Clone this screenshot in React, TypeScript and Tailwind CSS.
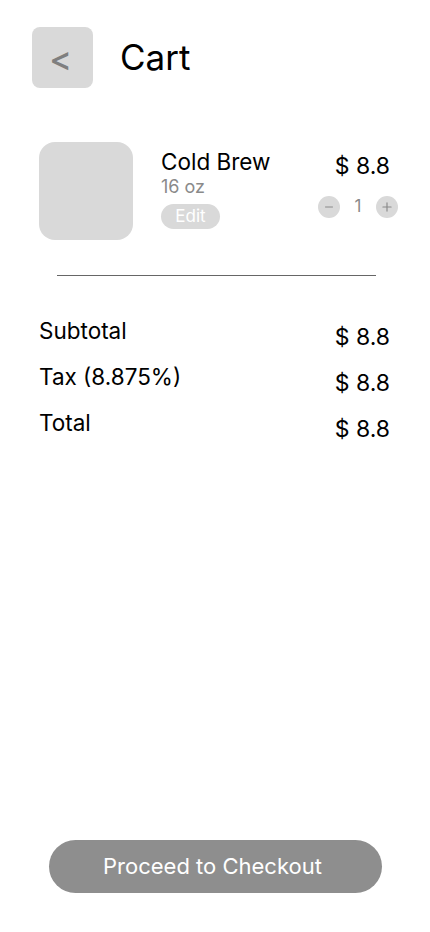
import { Minus, Plus } from "lucide-react";

const rows = [
  { label: "Subtotal", value: "$ 8.8" },
  { label: "Tax (8.875%)", value: "$ 8.8" },
  { label: "Total", value: "$ 8.8" },
];

export default function App() {
  return (
    <div
      className="w-[430px] h-[932px] bg-white flex flex-col text-black"
      style={{ fontFamily: "Inter, 'Noto Sans', sans-serif" }}
    >
      {/* Header */}
      <div className="flex items-center pt-[27px] pl-[32px] gap-[27px]">
        <button className="w-[61px] h-[61px] rounded-[8px] bg-[#d9d9d9] flex items-center justify-center pr-[4px] pt-[2px] text-[34px] font-medium text-[#7f7f7f]">
          &lt;
        </button>
        <h1 className="text-[35px] leading-none">Cart</h1>
      </div>

      {/* Cart item */}
      <div className="flex mt-[54px] pl-[39px] pr-[32px]">
        <div className="w-[94px] h-[98px] rounded-[16px] bg-[#d9d9d9]" />
        <div className="flex flex-col ml-[28px] pt-[6px]">
          <span className="text-[22.5px] leading-[27px]">Cold Brew</span>
          <span className="text-[18px] leading-[22px] mt-[1px] text-[#8a8a8a]">16 oz</span>
          <span className="mt-[6px] w-[59px] h-[25px] rounded-full bg-[#d9d9d9] text-white text-[17px] flex items-center justify-center">
            Edit
          </span>
        </div>
        <div className="ml-auto flex flex-col items-end pt-[10px]">
          <span className="text-[23px] leading-[28px] pr-[8px]">$ 8.8</span>
          <div className="flex items-center mt-[14px]">
            <span className="w-[22px] h-[22px] rounded-full bg-[#d9d9d9] flex items-center justify-center">
              <Minus size={12} strokeWidth={2} className="text-[#8a8a8a]" />
            </span>
            <span className="w-[36px] text-center text-[17px] text-[#8a8a8a]">1</span>
            <span className="w-[22px] h-[22px] rounded-full bg-[#d9d9d9] flex items-center justify-center">
              <Plus size={14} strokeWidth={2} className="text-[#8a8a8a]" />
            </span>
          </div>
        </div>
      </div>

      {/* Divider */}
      <div className="mx-[57px] mt-[35px] w-[319px] h-px bg-[#666666]" />

      {/* Summary */}
      <div className="flex flex-col gap-[12px] mt-[41px] pl-[39px] pr-[40px]">
        {rows.map((r) => (
          <div key={r.label} className="flex justify-between">
            <span className="text-[22.5px] leading-[28px]">{r.label}</span>
            <span className="text-[23px] leading-[28px] mt-[6px]">{r.value}</span>
          </div>
        ))}
      </div>

      {/* Checkout */}
      <div className="mt-auto mb-[39px] flex justify-center">
        <button className="w-[333px] h-[53px] ml-[1px] pr-[6px] rounded-full bg-[#8e8e8e] text-white text-[22px]">
          Proceed to Checkout
        </button>
      </div>
    </div>
  );
}
